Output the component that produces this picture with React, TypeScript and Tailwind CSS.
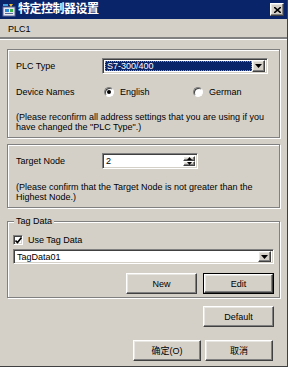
const raised =
  "border border-t-white border-l-white border-r-[#404040] border-b-[#404040] shadow-[inset_-1px_-1px_0_#808080,inset_1px_1px_0_#e8e6e0]";
const sunken =
  "border border-t-[#808080] border-l-[#808080] border-r-white border-b-white shadow-[inset_1px_1px_0_#404040,inset_-1px_-1px_0_#d4d0c8]";
const etched =
  "border border-[#808080] shadow-[inset_1px_1px_0_#fff,1px_1px_0_#fff]";

const ArrowDown = () => (
  <svg width="7" height="4" viewBox="0 0 7 4">
    <path d="M0 0h7L3.5 4z" fill="#000" />
  </svg>
);

const TitleIcon = () => (
  <svg width="14" height="14" viewBox="0 0 14 14">
    <rect x="1" y="4" width="12" height="9" fill="#e8e8f0" stroke="#5a6a9a" />
    <rect x="3" y="6" width="4" height="3" fill="#2a8ad8" />
    <rect x="8" y="6" width="3" height="3" fill="#3cb44a" />
    <rect x="3" y="10" width="8" height="1" fill="#5a6a9a" />
    <path d="M7 1l4 0-2 3z" fill="#f0c030" />
    <rect x="1" y="1" width="5" height="2" fill="#40a0e0" />
  </svg>
);

const Button = ({ label, focused = false, w }: { label: string; focused?: boolean; w: string }) => (
  <div className={`${w} h-[21px] ${focused ? "border border-black" : ""}`}>
    <div className={`w-full h-full ${raised} flex items-center justify-center`}>{label}</div>
  </div>
);

const Radio = ({ checked }: { checked?: boolean }) => (
  <div className="w-[10px] h-[10px] rounded-full border border-t-[#808080] border-l-[#808080] border-r-white border-b-white bg-white flex items-center justify-center shadow-[inset_1px_1px_0_#404040]">
    {checked && <div className="w-[4px] h-[4px] rounded-full bg-black" />}
  </div>
);

export default function App() {
  return (
    <div className="w-[288px] h-[367px] bg-[#d4d0c8] border-r border-b border-[#404040] flex flex-col overflow-hidden text-[9px] leading-[10px] text-black font-['Liberation_Sans','Noto_Sans_CJK_SC',sans-serif]">
      {/* title bar */}
      <div className="h-[19px] bg-[#0a246a] flex items-center pl-[2px] pr-[3px]">
        <TitleIcon />
        <span className="ml-[2px] text-white font-bold text-[12px] leading-[13px] tracking-[-0.5px]">特定控制器设置</span>
        <div className={`ml-auto w-[14px] h-[13px] bg-[#d4d0c8] ${raised} flex items-center justify-center`}>
          <svg width="7" height="6" viewBox="0 0 7 6">
            <path d="M0 0l7 6M7 0L0 6" stroke="#000" strokeWidth="1.6" />
          </svg>
        </div>
      </div>

      <div className="h-[18px] flex items-center pl-[8px] pt-[1px]">PLC1</div>
      <div className="h-[2px] bg-[#808080]" />
      <div className="h-px bg-white" />

      <div className="px-[7px] flex flex-col">
        {/* PLC type box */}
        <div className={`mt-[9px] h-[89px] ${etched} pl-[8px] pt-[8px] flex flex-col`}>
          <div className="h-[16px] flex items-center">
            <span className="w-[86px]">PLC Type</span>
            <div className={`w-[166px] h-[16px] ${sunken} bg-white flex items-center p-[2px]`}>
              <div className="flex-1 h-full bg-[#0a246a] text-white flex items-center pl-[2px] outline-dotted outline-1 outline-[#8090c0] -outline-offset-1">
                S7-300/400
              </div>
              <div className={`w-[13px] h-[12px] bg-[#d4d0c8] ${raised} flex items-center justify-center`}>
                <ArrowDown />
              </div>
            </div>
          </div>
          <div className="mt-[11px] h-[14px] flex items-center">
            <span className="w-[88px]">Device Names</span>
            <Radio checked />
            <span className="ml-[6px] w-[73px]">English</span>
            <Radio />
            <span className="ml-[6px]">German</span>
          </div>
          <p className="mt-[13px]">
            (Please reconfirm all address settings that you are using if you
            <br />
            have changed the "PLC Type".)
          </p>
        </div>

        {/* target node box */}
        <div className={`mt-[6px] h-[64px] ${etched} pl-[8px] pt-[8px] flex flex-col`}>
          <div className="h-[16px] flex items-center">
            <span className="w-[86px]">Target Node</span>
            <div className={`w-[96px] h-[16px] ${sunken} bg-white flex items-center p-[2px]`}>
              <span className="flex-1 pl-[1px]">2</span>
              <div className="w-[12px] h-full flex flex-col">
                <div className={`flex-1 bg-[#d4d0c8] ${raised} flex items-center justify-center`}>
                  <svg width="5" height="3" viewBox="0 0 5 3">
                    <path d="M0 3h5L2.5 0z" fill="#000" />
                  </svg>
                </div>
                <div className={`flex-1 bg-[#d4d0c8] ${raised} flex items-center justify-center`}>
                  <svg width="5" height="3" viewBox="0 0 5 3">
                    <path d="M0 0h5L2.5 3z" fill="#000" />
                  </svg>
                </div>
              </div>
            </div>
          </div>
          <p className="mt-[13px]">
            (Please confirm that the Target Node is not greater than the
            <br />
            Highest Node.)
          </p>
        </div>

        {/* tag data group */}
        <div className={`relative mt-[13px] h-[77px] ${etched} px-[5px] pt-[12px] flex flex-col`}>
          <span className="absolute -top-[6px] left-[6px] px-[2px] bg-[#d4d0c8]">Tag Data</span>
          <div className="h-[12px] flex items-center">
            <div className={`w-[10px] h-[10px] bg-white ${sunken} flex items-center justify-center`}>
              <svg width="7" height="7" viewBox="0 0 7 7">
                <path d="M0.5 3.5l2 2 4-5" stroke="#000" strokeWidth="1.6" fill="none" />
              </svg>
            </div>
            <span className="ml-[5px]">Use Tag Data</span>
          </div>
          <div className={`mt-[3px] h-[15px] ${sunken} bg-white flex items-center p-[2px]`}>
            <span className="flex-1 pl-[1px]">TagData01</span>
            <div className={`w-[13px] h-[11px] bg-[#d4d0c8] ${raised} flex items-center justify-center`}>
              <ArrowDown />
            </div>
          </div>
          <div className="mt-[9px] flex justify-end gap-[6px]">
            <Button label="New" w="w-[71px]" />
            <Button label="Edit" w="w-[71px]" focused />
          </div>
        </div>

        <div className="mt-[8px] flex justify-end pr-[6px]">
          <Button label="Default" w="w-[71px]" />
        </div>

        <div className="mt-[13px] flex justify-end gap-[4px] pr-[7px]">
          <Button label="确定(O)" w="w-[68px]" />
          <Button label="取消" w="w-[68px]" />
        </div>
      </div>
    </div>
  );
}
